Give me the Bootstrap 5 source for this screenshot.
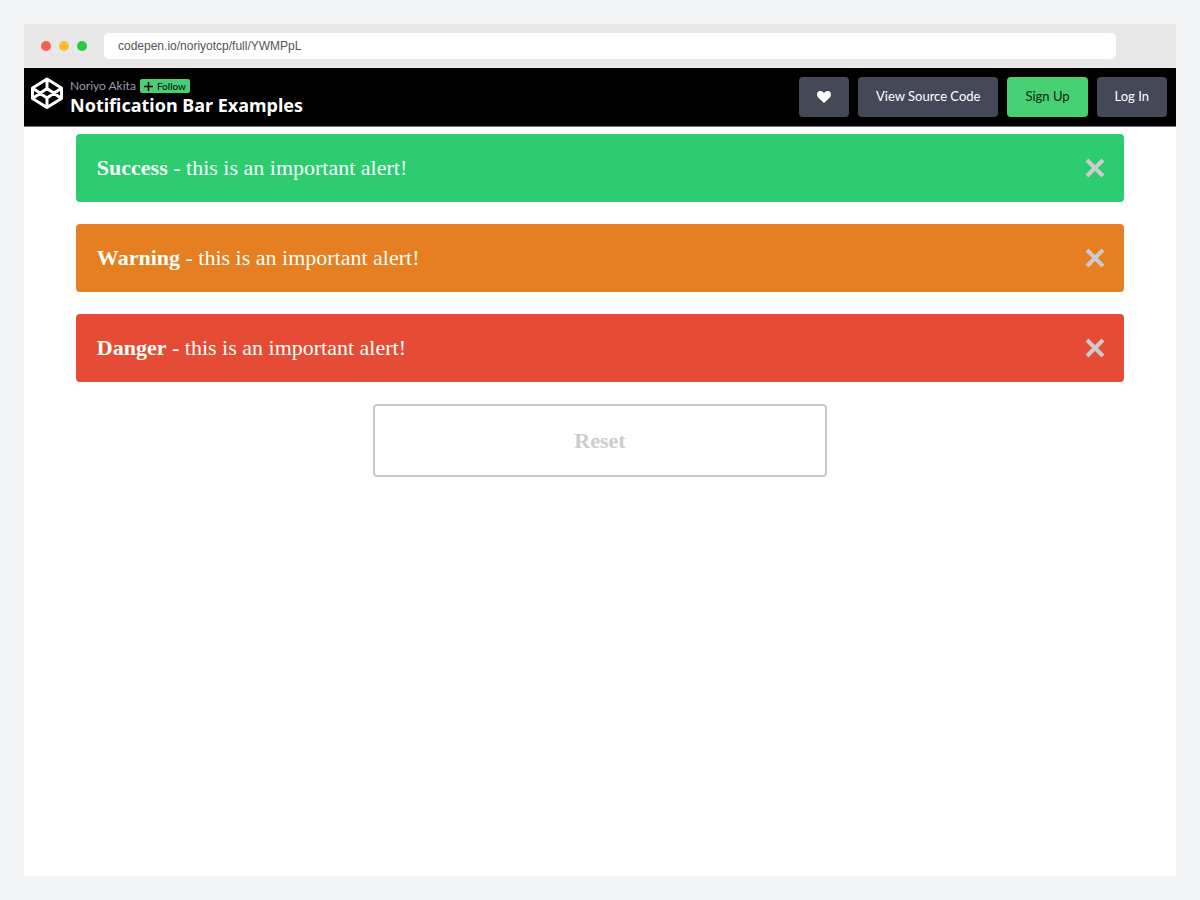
<!DOCTYPE html>
<html lang="en">
<head>
<meta charset="utf-8">
<meta name="viewport" content="width=device-width, initial-scale=1">
<title>Notification Bar Examples</title>
<link href="https://cdn.jsdelivr.net/npm/bootstrap@5.3.0/dist/css/bootstrap.min.css" rel="stylesheet">
<style>
  body { background: #f3f4f6; font-family: Lato, sans-serif; }
  .browser { background: #fff; }
  .chrome-bar { background: #e7e7e7; padding: 9px 60px 9px 17px; }
  .dot { width: 10px; height: 10px; }
  .dot-red { background: #fc5b57; }
  .dot-yellow { background: #fdbc30; }
  .dot-green { background: #28c840; }
  .address { height: 26px; margin-left: 17px; padding: 0 14px; font: 12px "Liberation Sans", sans-serif; color: #555; border-radius: 5px; }
  .pen-header { background: #000; border-bottom: 1px solid #77767c; padding: 9px 9px 9px 6px; }
  .pen-identity { gap: 6px; }
  .author { font-size: 12px; line-height: 18px; color: #9b9dad; }
  .follow { background: #47cf73; color: #000; font-size: 10px; line-height: 14px; border-radius: 2px; padding: 0 4px; }
  .pen-title { font: 700 18px/20px "Noto Sans", sans-serif; }
  .pen-actions { gap: 9px; }
  .pen-btn { --bs-btn-color: #fff; --bs-btn-bg: #444857; --bs-btn-hover-color: #fff; --bs-btn-hover-bg: #5a5f73; --bs-btn-border-width: 0; --bs-btn-border-radius: 4px; --bs-btn-font-size: 13px; --bs-btn-padding-x: 18px; height: 40px; }
  .pen-btn-green { --bs-btn-color: #0a2a12; --bs-btn-bg: #47cf73; }
  .notices { width: 91%; font-family: "Liberation Serif", serif; font-size: 22px; line-height: 26px; gap: 22px; padding-top: 7px; }
  .notice { padding: 21px; border: 0; border-radius: 4px; color: #f4fff8; }
  .notice-success { background: #2ecc71; }
  .notice-warning { background: #e67e22; }
  .notice-danger { background: #e64c35; }
  .dismiss { color: #ccc; margin-right: -3px; }
  .reset { width: 454px; max-width: 100%; height: 73px; font-size: 22px; --bs-btn-color: #ccc; --bs-btn-border-color: #c8c8c8; --bs-btn-border-width: 2px; --bs-btn-border-radius: 4px; }
</style>
</head>
<body class="min-vh-100 p-4 d-flex flex-column">
<div class="browser flex-grow-1">
  <div class="chrome-bar d-flex align-items-center">
    <div class="d-flex gap-2">
      <span class="dot dot-red rounded-circle"></span>
      <span class="dot dot-yellow rounded-circle"></span>
      <span class="dot dot-green rounded-circle"></span>
    </div>
    <input class="address flex-grow-1 border-0 bg-white" type="text" aria-label="Address" value="codepen.io/noriyotcp/full/YWMPpL">
  </div>

  <header class="pen-header d-flex justify-content-between align-items-start flex-wrap">
    <div class="pen-identity d-flex align-items-start">
      <a href="#" aria-label="CodePen home" class="d-flex text-white">
        <svg width="34" height="34" viewBox="0 0 34 34" fill="none" stroke="currentColor" stroke-width="3" stroke-linejoin="round">
          <path d="M17 2 31.500 11v10.500L17 30.500 2.500 21.500V11zM17 2v9.500M17 21v9.500M2.500 11 17 21 31.500 11M2.500 21.500 17 11.500l14.500 10"/>
        </svg>
      </a>
      <div>
        <div class="d-flex align-items-center gap-1">
          <a href="#" class="author text-decoration-none">Noriyo Akita</a>
          <button type="button" class="follow border-0 d-flex align-items-center">
            <svg class="me-1" width="9" height="9" viewBox="0 0 9 9" stroke="currentColor" stroke-width="1.500" aria-hidden="true"><path d="M4.500 0v9M0 4.500h9"/></svg>Follow</button>
        </div>
        <h1 class="pen-title text-white m-0">Notification Bar Examples</h1>
      </div>
    </div>
    <nav class="pen-actions d-flex">
      <button type="button" class="btn pen-btn d-flex align-items-center" aria-label="Love">
        <svg width="14" height="12" viewBox="0 0 14 12" fill="currentColor"><path d="M7 12 1.200 6.500C-.6 4.500-.2 1.600 1.500.5 3.500-.6 5.800.2 7 2.100 8.200.2 10.500-.6 12.500.5c1.700 1.100 2.100 4 .3 6z"/></svg>
      </button>
      <button type="button" class="btn pen-btn">View Source Code</button>
      <button type="button" class="btn pen-btn pen-btn-green">Sign Up</button>
      <button type="button" class="btn pen-btn">Log In</button>
    </nav>
  </header>

  <main class="notices mx-auto d-flex flex-column">
    <div class="notice notice-success alert m-0 d-flex justify-content-between align-items-center" role="alert">
      <span><strong>Success</strong> - this is an important alert!</span>
      <button type="button" class="dismiss btn p-0 border-0 d-flex" aria-label="Close">
        <svg width="22" height="22" viewBox="0 0 22 22" stroke="#ccc" stroke-width="4"><path d="m3 3 16 16M19 3 3 19"/></svg>
      </button>
    </div>
    <div class="notice notice-warning alert m-0 d-flex justify-content-between align-items-center" role="alert">
      <span><strong>Warning</strong> - this is an important alert!</span>
      <button type="button" class="dismiss btn p-0 border-0 d-flex" aria-label="Close">
        <svg width="22" height="22" viewBox="0 0 22 22" stroke="#ccc" stroke-width="4"><path d="m3 3 16 16M19 3 3 19"/></svg>
      </button>
    </div>
    <div class="notice notice-danger alert m-0 d-flex justify-content-between align-items-center" role="alert">
      <span><strong>Danger</strong> - this is an important alert!</span>
      <button type="button" class="dismiss btn p-0 border-0 d-flex" aria-label="Close">
        <svg width="22" height="22" viewBox="0 0 22 22" stroke="#ccc" stroke-width="4"><path d="m3 3 16 16M19 3 3 19"/></svg>
      </button>
    </div>
    <button type="button" class="reset btn fw-bold align-self-center">Reset</button>
  </main>
</div>
<script src="https://cdn.jsdelivr.net/npm/bootstrap@5.3.0/dist/js/bootstrap.bundle.min.js"></script>
</body>
</html>
